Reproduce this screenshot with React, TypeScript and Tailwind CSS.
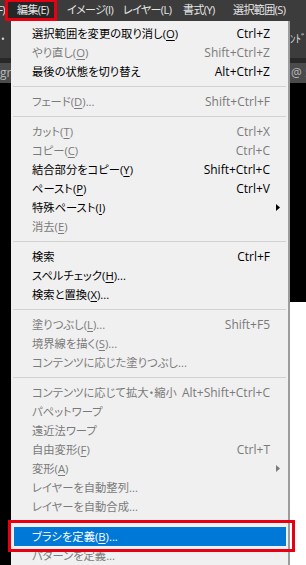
type Entry =
  | 'sep'
  | {
      label: string;
      k?: string;
      tail?: string;
      shortcut?: string;
      disabled?: boolean;
      sub?: boolean;
      active?: boolean;
    };

const entries: Entry[] = [
  { label: '選択範囲を変更の取り消し', k: 'O', shortcut: 'Ctrl+Z' },
  { label: 'やり直し', k: 'O', shortcut: 'Shift+Ctrl+Z', disabled: true },
  { label: '最後の状態を切り替え', shortcut: 'Alt+Ctrl+Z' },
  'sep',
  { label: 'フェード', k: 'D', tail: '...', shortcut: 'Shift+Ctrl+F', disabled: true },
  'sep',
  { label: 'カット', k: 'T', shortcut: 'Ctrl+X', disabled: true },
  { label: 'コピー', k: 'C', shortcut: 'Ctrl+C', disabled: true },
  { label: '結合部分をコピー', k: 'Y', shortcut: 'Shift+Ctrl+C' },
  { label: 'ペースト', k: 'P', shortcut: 'Ctrl+V' },
  { label: '特殊ペースト', k: 'I', sub: true },
  { label: '消去', k: 'E', disabled: true },
  'sep',
  { label: '検索', shortcut: 'Ctrl+F' },
  { label: 'スペルチェック', k: 'H', tail: '...' },
  { label: '検索と置換', k: 'X', tail: '...' },
  'sep',
  { label: '塗りつぶし', k: 'L', tail: '...', shortcut: 'Shift+F5', disabled: true },
  { label: '境界線を描く', k: 'S', tail: '...', disabled: true },
  { label: 'コンテンツに応じた塗りつぶし...', disabled: true },
  'sep',
  { label: 'コンテンツに応じて拡大・縮小', shortcut: 'Alt+Shift+Ctrl+C', disabled: true },
  { label: 'パペットワープ', disabled: true },
  { label: '遠近法ワープ', disabled: true },
  { label: '自由変形', k: 'F', shortcut: 'Ctrl+T', disabled: true },
  { label: '変形', k: 'A', sub: true, disabled: true },
  { label: 'レイヤーを自動整列...', disabled: true },
  { label: 'レイヤーを自動合成...', disabled: true },
  'sep',
  { label: 'ブラシを定義', k: 'B', tail: '...', active: true },
  { label: 'パターンを定義...', disabled: true },
];

function Arrow({ color }: { color: string }) {
  return (
    <svg width="4" height="7" viewBox="0 0 4 7" className="ml-[6px]">
      <path d="M0 0 L4 3.5 L0 7 Z" fill={color} />
    </svg>
  );
}

function MenuRow({ e }: { e: Exclude<Entry, 'sep'> }) {
  const color = e.active ? 'text-white' : e.disabled ? 'text-[#7a7a7a]' : 'text-black';
  return (
    <div className={`h-[19px] flex ${e.active ? 'ml-[3px] mr-[2px] bg-[#0078d7] pl-[18px]' : 'pl-[21px]'}`}>
      <div className={`flex-1 flex items-center leading-[19px] whitespace-nowrap text-[11.3px] ${color}`}>
        <span>
          {e.label}
          {e.k && (
            <>
              (<span className="underline underline-offset-[2px]">{e.k}</span>)
            </>
          )}
          {e.tail}
        </span>
      </div>
      {e.shortcut && (
        <div className={`flex items-center leading-[19px] whitespace-nowrap ${color}`}>{e.shortcut}</div>
      )}
      <div className={`${e.active ? 'w-[16px]' : 'w-[18px]'} flex items-center`}>
        {e.sub && <Arrow color={e.disabled ? '#7a7a7a' : '#000'} />}
      </div>
    </div>
  );
}

export default function App() {
  return (
    <div className="w-[306px] h-[565px] overflow-hidden relative bg-black flex flex-col font-['Open_Sans','Noto_Sans_CJK_JP',sans-serif] [font-feature-settings:'palt'] text-[12px]">
      {/* menu bar */}
      <div className="h-[21px] bg-[#3c3c3c] flex items-stretch text-[#e6e6e6] text-[11px] tracking-[-0.6px] whitespace-nowrap">
        <div className="w-[5px] flex justify-end items-center">
          <span>F)</span>
        </div>
        <div className="w-[52px] border-[3px] border-t-[2px] border-[#e60012] bg-[#262626] flex items-center pl-[9px]">
          編集(E)
        </div>
        <div className="ml-[10px] w-[56px] flex items-center">イメージ(I)</div>
        <div className="w-[60px] flex items-center">レイヤー(L)</div>
        <div className="w-[50px] flex items-center">書式(Y)</div>
        <div className="flex items-center">選択範囲(S)</div>
      </div>

      {/* options bar */}
      <div className="h-[37px] bg-[#3c3c3c] flex items-center justify-between text-[#d8d8d8]">
        <span className="ml-[1px] text-[10px]">•</span>
        <span className="w-[16px] overflow-hidden whitespace-nowrap text-[11px]">ﾝﾄﾞr</span>
      </div>
      <div className="h-[5px] bg-[#282828]" />

      {/* document tab */}
      <div className="h-[20px] bg-[#4b4b4b] flex items-center justify-between text-[#b8b8b8] whitespace-nowrap">
        <span className="w-[11px] overflow-hidden">gr</span>
        <span className="w-[15px] overflow-hidden">@ 5</span>
      </div>

      {/* canvas */}
      <div className="flex-1 flex flex-col">
        <div className="h-[219px]" />
        <div className="flex-1 ml-[150px] bg-white" />
      </div>

      {/* edit menu popup */}
      <div className="absolute left-[11px] top-[21px] w-[279px] h-[560px] bg-[#f0f0f0] border-r-2 border-[#9c9c9c] pt-[3px]">
        {entries.map((e, i) =>
          e === 'sep' ? (
            <div key={i} className="h-[11px] flex items-center px-[2px]">
              <div className="h-px w-full bg-[#d2d2d2]" />
            </div>
          ) : (
            <MenuRow key={i} e={e} />
          )
        )}
      </div>

      {/* annotation */}
      <div className="absolute left-[8px] top-[520px] w-[287px] h-[32px] border-[3px] border-[#e60012]" />
    </div>
  );
}
